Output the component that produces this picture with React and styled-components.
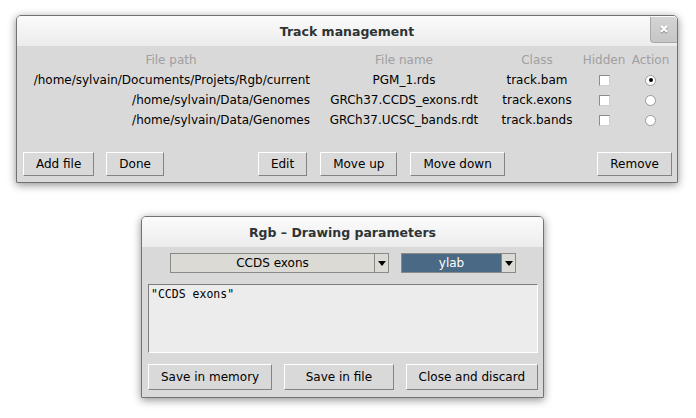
import React from 'react'
import styled, { createGlobalStyle } from 'styled-components'

const GlobalStyle = createGlobalStyle`
    html, body {
        margin: 0;
        padding: 0;
        background: #ffffff;
    }
    body {
        font-family: "DejaVu Sans", "Liberation Sans", sans-serif;
        font-size: 12px;
        color: #000000;
    }
`

const Page = styled.div`
    width: 696px;
    height: 418px;
    box-sizing: border-box;
    padding-top: 15px;
    display: flex;
    flex-direction: column;
    align-items: flex-start;
    gap: 33px;
`

const Window = styled.div`
    margin-left: ${p => p.$left}px;
    width: ${p => p.$width}px;
    height: ${p => p.$height}px;
    box-sizing: border-box;
    border: 1px solid #727272;
    border-radius: 5px 5px 1px 1px;
    background: #d9d9d9;
    box-shadow: 0 2px 9px rgba(0, 0, 0, 0.45);
    display: flex;
    flex-direction: column;
    overflow: hidden;
`

const TitleBar = styled.div`
    height: 30px;
    flex: none;
    display: grid;
    grid-template-columns: 1fr auto 1fr;
    align-items: center;
    background: linear-gradient(#fbfbfb, #ececec);
`

const Title = styled.div`
    grid-column: 2;
    font-weight: bold;
    font-size: 12.5px;
    color: #2e3436;
`

const CloseButton = styled.div`
    grid-column: 3;
    justify-self: end;
    align-self: start;
    width: 27px;
    height: 26px;
    margin-top: 1px;
    box-sizing: border-box;
    border-left: 1px solid #a9a9a9;
    border-bottom: 1px solid #a9a9a9;
    border-radius: 0 4px 0 4px;
    background: linear-gradient(#d4d4d4, #c6c6c6);
    display: flex;
    align-items: center;
    justify-content: center;
`

const Table = styled.div`
    display: grid;
    grid-template-columns: 278px 188px 78px 56px 37px;
    grid-auto-rows: 20px;
    align-items: center;
    padding: 4px 0 0 15px;
`

const Cell = styled.div`
    color: ${p => (p.$head ? '#a0a0a0' : '#000000')};
    white-space: nowrap;
    display: flex;
    justify-content: ${p => (p.$align === 'right' ? 'flex-end' : 'center')};
`

const Check = styled.span`
    width: 11px;
    height: 11px;
    box-sizing: border-box;
    background: #ffffff;
    border: 1px solid #8c8c8c;
    border-right-color: #d0d0d0;
    border-bottom-color: #d0d0d0;
`

const Radio = styled.span`
    width: 11px;
    height: 11px;
    box-sizing: border-box;
    border-radius: 50%;
    background: #ffffff;
    border: 1px solid #9a9a9a;
    display: flex;
    align-items: center;
    justify-content: center;
    &::after {
        content: '';
        width: 4px;
        height: 4px;
        border-radius: 50%;
        background: ${p => (p.$on ? '#000000' : 'transparent')};
    }
`

const Spacer = styled.div`
    flex: 1;
`

const ButtonRow = styled.div`
    display: flex;
    align-items: center;
    padding: 0 5px 6px 6px;
`

const Group = styled.div`
    display: flex;
    gap: ${p => p.$gap || 12}px;
    margin-left: ${p => p.$offset || 0}px;
`

const Button = styled.div`
    height: ${p => p.$h || 24}px;
    box-sizing: border-box;
    padding: 0 12px;
    border: 1px solid;
    border-color: #ffffff #838383 #838383 #ffffff;
    background: #d9d9d9;
    display: flex;
    align-items: center;
    justify-content: center;
    white-space: nowrap;
`

const ParamBody = styled.div`
    flex: 1;
    display: flex;
    flex-direction: column;
    padding: 6px 5px 6px 6px;
    gap: 11px;
`

const ComboRow = styled.div`
    display: flex;
    justify-content: center;
    gap: 12px;
`

const Combo = styled.div`
    width: ${p => p.$width}px;
    height: 20px;
    display: flex;
`

const ComboField = styled.div`
    flex: 1;
    box-sizing: border-box;
    border: 1px solid #8b8a84;
    background: ${p => (p.$selected ? '#4a6984' : '#dcdad5')};
    color: ${p => (p.$selected ? '#ffffff' : '#000000')};
    display: flex;
    align-items: center;
    justify-content: center;
`

const ComboArrow = styled.div`
    width: 14px;
    box-sizing: border-box;
    border: 1px solid #8b8a84;
    border-left: none;
    background: #dcdad5;
    display: flex;
    align-items: center;
    justify-content: center;
    &::after {
        content: '';
        border-left: 4px solid transparent;
        border-right: 4px solid transparent;
        border-top: 5px solid #000000;
    }
`

const TextArea = styled.div`
    height: 69px;
    box-sizing: border-box;
    border: 1px solid;
    border-color: #7c7c7c #ffffff #ffffff #7c7c7c;
    background: #ececec;
    padding: 2px 2px;
    font-family: "DejaVu Sans Mono", "Liberation Mono", monospace;
    font-size: 11.5px;
`

const BottomButtons = styled.div`
    display: grid;
    grid-template-columns: repeat(3, 1fr);
    gap: 12px;
`

const rows = [
    { path: '/home/sylvain/Documents/Projets/Rgb/current', name: 'PGM_1.rds', cls: 'track.bam', on: true },
    { path: '/home/sylvain/Data/Genomes', name: 'GRCh37.CCDS_exons.rdt', cls: 'track.exons', on: false },
    { path: '/home/sylvain/Data/Genomes', name: 'GRCh37.UCSC_bands.rdt', cls: 'track.bands', on: false },
]

const CloseIcon = () => (
    <svg width="11" height="11" viewBox="0 0 11 11">
        <path d="M2 3 L8 9 M8 3 L2 9" stroke="#8a8a8a" strokeWidth="2.4" />
        <path d="M2 2 L8 8 M8 2 L2 8" stroke="#ffffff" strokeWidth="2" />
    </svg>
)

export default function App() {
    return (
        <>
            <GlobalStyle />
            <Page>
                <Window $left={16} $width={662} $height={168}>
                    <TitleBar>
                        <Title>Track management</Title>
                        <CloseButton><CloseIcon /></CloseButton>
                    </TitleBar>
                    <Table>
                        <Cell $head>File path</Cell>
                        <Cell $head>File name</Cell>
                        <Cell $head>Class</Cell>
                        <Cell $head>Hidden</Cell>
                        <Cell $head>Action</Cell>
                        {rows.map((r, i) => (
                            <React.Fragment key={i}>
                                <Cell $align="right">{r.path}</Cell>
                                <Cell>{r.name}</Cell>
                                <Cell>{r.cls}</Cell>
                                <Cell><Check /></Cell>
                                <Cell><Radio $on={r.on} /></Cell>
                            </React.Fragment>
                        ))}
                    </Table>
                    <Spacer />
                    <ButtonRow>
                        <Group>
                            <Button>Add file</Button>
                            <Button>Done</Button>
                        </Group>
                        <Group $offset={94} $gap={13}>
                            <Button>Edit</Button>
                            <Button>Move up</Button>
                            <Button>Move down</Button>
                        </Group>
                        <Spacer />
                        <Button>Remove</Button>
                    </ButtonRow>
                </Window>

                <Window $left={141} $width={403} $height={182}>
                    <TitleBar>
                        <Title>Rgb – Drawing parameters</Title>
                    </TitleBar>
                    <ParamBody>
                        <ComboRow>
                            <Combo $width={219}>
                                <ComboField>CCDS exons</ComboField>
                                <ComboArrow />
                            </Combo>
                            <Combo $width={115}>
                                <ComboField $selected>ylab</ComboField>
                                <ComboArrow />
                            </Combo>
                        </ComboRow>
                        <TextArea>"CCDS exons"</TextArea>
                        <BottomButtons>
                            <Button $h={26}>Save in memory</Button>
                            <Button $h={26}>Save in file</Button>
                            <Button $h={26}>Close and discard</Button>
                        </BottomButtons>
                    </ParamBody>
                </Window>
            </Page>
        </>
    )
}
